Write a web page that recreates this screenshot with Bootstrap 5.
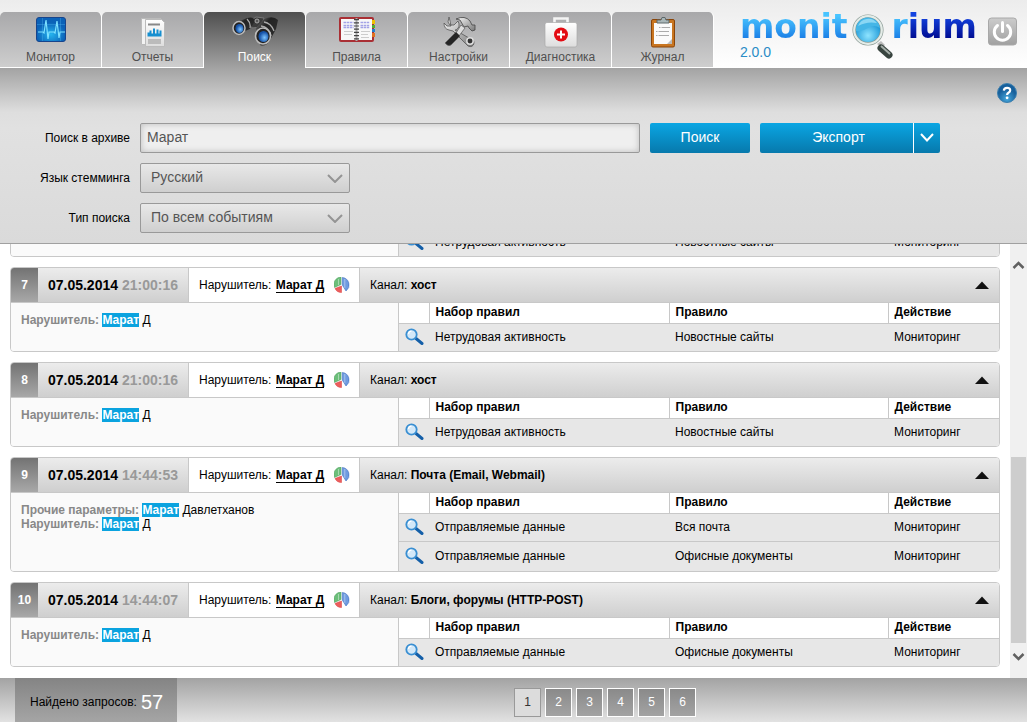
<!DOCTYPE html>
<html lang="ru">
<head>
<meta charset="utf-8">
<meta name="viewport" content="width=device-width, initial-scale=1">
<title>Monitorium – Поиск</title>
<link href="https://cdn.jsdelivr.net/npm/bootstrap@5.3.0/dist/css/bootstrap.min.css" rel="stylesheet">
<style>
  body { font-family: "Liberation Sans", Arial, sans-serif; font-size: 12px; line-height: 14px; color: #000; background: #fff; }
  /* header */
  .topbar { height: 68px; background: linear-gradient(#ececec, #fff); }
  .tab-link { width: 102px; height: 56px; padding-top: 2px; border-right: 1px solid #fff; border-bottom: 1px solid #fff; border-radius: 5px 5px 0 0; background: linear-gradient(#a8a8aa, #cecece) padding-box; color: #505050; text-decoration: none; }
  .tab-link svg { width: 36px; height: 36px; }
  .tab-link .wide-icon { width: 46px; }
  .tab-link.active { background: linear-gradient(#4f4f4f, #a3a3a3); color: #fff; border-bottom: 0; }
  .tools { padding-right: 10px; gap: 11px; }
  .brand-row { height: 44px; padding-top: 9px; }
  .brand-word { font: bold 33px/36px "DejaVu Sans", sans-serif; color: transparent; background: linear-gradient(#48c4ff 20%, #1a7ee6 85%); -webkit-background-clip: text; background-clip: text; }
  .brand-dark { background-image: linear-gradient(#1444e0 20%, #000c90 85%); }
  .brand-mark { width: 46px; height: 48px; margin: 4px -2px 0 0; }
  .version { font-size: 14px; line-height: 14px; color: #2a8cc6; padding-top: 1px; }
  .plain-btn { border: 0; background: none; padding: 0; line-height: 0; }
  .power { margin-top: 17px; }
  /* search panel */
  .search-panel { height: 176px; background: linear-gradient(#a3a3a3, #dedede 44px, #e1e1e1 60px, #dadada); border-bottom: 1px solid #a0a0a0; }
  .help-row { padding: 15px 10px 20px; }
  .form-rows { gap: 10px; padding-left: 10px; }
  .form-line { gap: 10px; }
  .field-label { width: 120px; text-align: right; }
  .query, .choice { height: 30px; border: 1px solid #999; border-radius: 2px; font-size: 14px; line-height: 20px; color: #555; }
  .query { flex: 0 1 500px; min-width: 0; padding: 0 6px 2px; background: #efefef; box-shadow: inset 0 0 6px #bbb; }
  .choice { width: 210px; padding: 0 30px 2px 10px; appearance: none; background: url("data:image/svg+xml,%3Csvg xmlns='http://www.w3.org/2000/svg' width='16' height='9'%3E%3Cpath d='M1 1l7 7 7-7' fill='none' stroke='%23949494' stroke-width='2'/%3E%3C/svg%3E") no-repeat right 6px center, linear-gradient(#e8e8e8, #cfcfcf); }
  .act { height: 30px; border: 0; border-radius: 2px; padding: 0 0 2px; font-size: 14px; line-height: 14px; color: #fff; background: linear-gradient(#0aa6e3, #0779ac); }
  .act-find { width: 100px; }
  .act-export { width: 153px; border-radius: 2px 0 0 2px; padding-left: 4px; }
  .act-more { width: 27px; border-left: 1px solid #fff; border-radius: 0 2px 2px 0; }
  /* results */
  .results { min-height: 0; padding: 0 10px 11px; gap: 10px; }
  .event { flex: none; border: 1px solid #c8c8c8; border-radius: 4px; overflow: hidden; }
  .event-head { height: 35px; border-bottom: 1px solid #c8c8c8; background: linear-gradient(#ececec, #cfcfcf); }
  .event-head > * { padding-bottom: 1px; }
  .event-no { width: 27px; color: #fff; background: linear-gradient(#737373, #a8a8a8); }
  .event-when { width: 151px; font-size: 14px; border-right: 1px solid #c8c8c8; }
  .event-when time + time { color: #999; }
  .event-who { width: 171px; padding-left: 10px; gap: 10px; background: #fff; border-right: 1px solid #c8c8c8; }
  .event-who a { margin-left: 1px; color: #000; text-decoration: none; border-bottom: 1px solid #000; }
  .event-channel { padding: 0 10px; }
  .event-body { display: grid; grid-template-columns: 388fr 600fr; }
  .params { padding: 10px; background: #fafafa; border-right: 1px solid #c8c8c8; }
  .params b { color: #888; }
  .params mark { padding: 0; color: #fff; background: #0ba3df; font-weight: bold; }
  .rules { width: 100%; table-layout: fixed; border-collapse: collapse; }
  .rules th, .rules td { padding: 0 0 0 6px; }
  .rules th { height: 20px; padding-bottom: 2px; border-bottom: 1px solid #c8c8c8; border-right: 1px solid #c8c8c8; }
  .rules th:last-child { border-right: 0; }
  .rules td { height: 28px; background: #e7e7e7; }
  .rules tr + tr td { height: 30px; border-top: 1px solid #c8c8c8; }
  .c-icon { width: 30px; } .c-set { width: 240px; } .c-rule { width: 219px; }
  /* scroll rail */
  .rail { width: 17px; padding: 13px 0 14px; background: #f0f0f0; }
  .rail-thumb { flex: 186 1 0; background: #cdcdcd; width: 15px; }
  .rail-gap { flex: 183 1 0; }
  /* footer */
  .bottombar { height: 44px; background: linear-gradient(#a3a3a3, #e2e2e2); }
  .found { width: 162px; margin-left: 15px; padding: 4px 0 0 15px; background: linear-gradient(#848484, #a5a5a5); }
  .found strong { font-size: 20px; font-weight: normal; color: #fff; }
  .pages { margin: 0 auto; padding: 4px 0 0 6px; }
  .page-btn { width: 27px; height: 29px; border: 1px solid #fff; color: #fff; background: linear-gradient(#8a8a8a, #a3a3a3); text-decoration: none; }
  .page-btn.current { border-color: #999; color: #333; background: #dcdcdc; }
</style>
</head>
<body>
<svg width="0" height="0" class="position-absolute" aria-hidden="true">
  <defs>
    <linearGradient id="steel" x1="0" y1="0" x2="1" y2="1"><stop offset="0" stop-color="#fafafa"/><stop offset="1" stop-color="#777"/></linearGradient>
    <linearGradient id="paper" x1="0" y1="0" x2="0" y2="1"><stop offset="0" stop-color="#fff"/><stop offset="1" stop-color="#ddd"/></linearGradient>
    <linearGradient id="dark" x1="0" y1="0" x2="1" y2="1"><stop offset="0" stop-color="#888"/><stop offset=".35" stop-color="#222"/><stop offset="1" stop-color="#333"/></linearGradient>
    <radialGradient id="screen" cy=".7"><stop offset="0" stop-color="#25b4ee"/><stop offset="1" stop-color="#0b62b8"/></radialGradient>
    <radialGradient id="lens" cx=".5" cy=".7"><stop offset="0" stop-color="#8fe4ff"/><stop offset="1" stop-color="#1f9ad8"/></radialGradient>
    <radialGradient id="eye" cx=".6" cy=".6"><stop offset="0" stop-color="#7cc4ff"/><stop offset="1" stop-color="#1552a8"/></radialGradient>
    <radialGradient id="helpfill" cx=".5" cy=".8"><stop offset="0" stop-color="#46a8dc"/><stop offset="1" stop-color="#17609c"/></radialGradient>
    <linearGradient id="pow" x1="0" y1="0" x2="0" y2="1"><stop offset="0" stop-color="#ccc"/><stop offset="1" stop-color="#a0a0a0"/></linearGradient>
    <symbol id="glass" viewBox="0 0 19 18">
      <path d="M11 10.500l6 5" stroke="#145fa8" stroke-width="3" stroke-linecap="round"/>
      <circle cx="6.500" cy="6.500" r="5.200" fill="#d3e8f8" stroke="#3a8fd2" stroke-width="1.800"/>
      <path d="M3.500 6a3 3 0 0 1 3-2.800" fill="none" stroke="#fff" stroke-width="1.300"/>
    </symbol>
    <symbol id="pie" viewBox="0 0 16 16">
      <path d="M7 7.500V0A7.500 7.500 0 0 0 .5 10.500z" fill="#6cbf7a" stroke="#4a9c5a" stroke-width=".5"/>
      <path d="M8.300 8V.5a7.500 7.500 0 0 1 3.700 13.500z" fill="#6f9be0" stroke="#3f6fc0" stroke-width=".6"/>
      <path d="M7.500 9v6.500a7 7 0 0 1-6.500-4z" fill="#ec5e5e" stroke="#d63b3b" stroke-width=".5"/>
      <path d="M4.500 2v6M10.800 2v9" stroke="#fff" stroke-opacity=".4"/>
    </symbol>
    <symbol id="tri" viewBox="0 0 14 8"><path d="M0 8l7-7.500 7 7.500z" fill="#111"/></symbol>
  </defs>
</svg>

<div class="d-flex flex-column vh-100 overflow-hidden">
  <header class="topbar d-flex flex-shrink-0">
    <nav class="d-flex align-items-end" aria-label="Разделы">
      <a href="#" class="tab-link d-flex flex-column align-items-center">
        <svg viewBox="0 0 36 36"><rect x="3.500" y="3.500" width="29" height="24" rx="2.500" fill="url(#screen)" stroke="#17448c"/><path d="M5 18h5l1 1 2-13 2 19 1-7h5l1 1 2-12 2 17 1-6h5" fill="none" stroke="#7fe2ff" stroke-width="1.200"/><path d="M4 10.500h28M9.500 4v23M27.500 4v23" stroke="#5bc0f5" stroke-opacity=".3"/></svg>
        <span>Монитор</span></a>
      <a href="#" class="tab-link d-flex flex-column align-items-center">
        <svg viewBox="0 0 36 36"><path d="M6.500 4.500h19v26h-19z" fill="#f2f2f2" stroke="#bbb"/><path d="M10.500 5.500h16l3 3v24h-19z" fill="url(#paper)" stroke="#bbb"/><path d="M13 10.500h12" stroke="#888" stroke-width="2"/><path d="M12.500 22.500v-4h2v-2h2v3h1.500v-5h2v5h1.500v-4h2v4h1v-3h2v6z" fill="#168fd0"/><path d="M13 25h13v5H13z" fill="#bbb"/></svg>
        <span>Отчеты</span></a>
      <a href="#" class="tab-link active d-flex flex-column align-items-center" aria-current="page">
        <svg class="wide-icon" viewBox="0 0 46 36"><path d="M18 7l6-4 8 1-3 9-9 1z" fill="#3b3b3b" stroke="#777"/><path d="M3 9l12-5q7-2 8 3l-5 8-10 4z" fill="url(#dark)"/><path d="M24 14l8-9q9-4 14 1l-2 9-7 13q-4 5-9 3z" fill="url(#dark)"/><path d="M32 8q7 1 10 9M29 12q8 1 10 10M15 5q4 4 3 9" stroke="#aaa" fill="none" stroke-width="1.300"/><ellipse cx="7" cy="14" rx="6" ry="6.500" fill="#222" stroke="#bbb" stroke-width="1.500"/><ellipse cx="7.500" cy="14.500" rx="4" ry="4.500" fill="url(#eye)"/><ellipse cx="31" cy="22" rx="7.500" ry="8" fill="#222" stroke="#bbb" stroke-width="1.600"/><ellipse cx="31.500" cy="22.500" rx="5" ry="5.500" fill="url(#eye)"/><circle cx="25" cy="7" r="2" fill="#555" stroke="#aaa"/></svg>
        <span>Поиск</span></a>
      <a href="#" class="tab-link d-flex flex-column align-items-center">
        <svg viewBox="0 0 36 36"><rect x="0" y="3" width="35" height="25" rx="2" fill="#a92f34"/><path d="M33 6h3v4h-3z" fill="#efc100"/><path d="M33 11h3v3h-3z" fill="#50b030"/><path d="M33 15h3v3h-3z" fill="#2080d0"/><path d="M33 19h3v4h-3z" fill="#e07020"/><path d="M2 5h31v21H2z" fill="#f8f8f8"/><path d="M4.500 8.500h10M4.500 11.500h10M4.500 13.500h10M21.500 8.500h9M21.500 11.500h9M21.500 13.500h9" stroke="#a3a3e6" stroke-width="1.600" stroke-dasharray="2.500 .6"/><path d="M5 17.500h9M5 20.500h8M22 17.500h9M22 20.500h7M22 23.500h8" stroke="#ccc"/><path d="M17.500 4v23" stroke="#aaa" stroke-width="2"/><path d="M17.500 5v21" stroke="#444" stroke-width="5" stroke-dasharray="1.200 2"/></svg>
        <span>Правила</span></a>
      <a href="#" class="tab-link d-flex flex-column align-items-center">
        <svg viewBox="0 0 36 36"><path d="M9 3l-1 5 2 3 4 0 4-4q3 6-2 9l-1 0 14 8q5 1 5 5-1 5-6 3l-15-15-4-1q-5-1-5-7l3 3 4 0-1-5z" fill="url(#steel)" stroke="#555" stroke-width=".8" transform="translate(-1 0)"/><circle cx="29" cy="27" r="3.200" fill="#333" stroke="#ddd" stroke-width="1.500"/><path d="M19 6l-4-1q9-4 14 2l2 4 3 0 0 5-3 1-3-3-1-2-4 1z" fill="url(#steel)" stroke="#444" stroke-width=".8"/><path d="M20 11l4 3-6 8-3-3z" fill="#ddd" stroke="#555" stroke-width=".7"/><path d="M15 18l4 4-9 9q-3 2-6-2z" fill="#252525" stroke="#666" stroke-width=".6"/></svg>
        <span>Настройки</span></a>
      <a href="#" class="tab-link d-flex flex-column align-items-center">
        <svg viewBox="0 0 36 36"><path d="M11.500 10V4.500h13V10" fill="none" stroke="#f4f4f4" stroke-width="2.600"/><rect x="2" y="8.500" width="32" height="24.500" rx="2" fill="url(#paper)" stroke="#aaa" stroke-width=".7"/><circle cx="18" cy="20.500" r="7" fill="#e30b12"/><path d="M18 16.500v8M14 20.500h8" stroke="#fff" stroke-width="2"/></svg>
        <span>Диагностика</span></a>
      <a href="#" class="tab-link d-flex flex-column align-items-center">
        <svg viewBox="0 0 36 36"><rect x="6.500" y="5.500" width="23" height="27.500" rx="1.500" fill="#c87520" stroke="#8a4509"/><path d="M9 9h18v21H9z" fill="#fafafa"/><path d="M27 25v5h-5z" fill="#bbb"/><path d="M14 13.500h11M11 17.500h13M11 21.500h13" stroke="#aaa" stroke-dasharray="1.500 1 20"/><path d="M12 9V6h4l1-2.500h3L21 6h3v3z" fill="#a9b7b9" stroke="#5d686a"/></svg>
        <span>Журнал</span></a>
    </nav>
    <div class="tools ms-auto d-flex">
      <div>
        <div class="brand-row d-flex">
          <span class="brand-word">monit</span>
          <svg class="brand-mark position-relative z-1" viewBox="0 0 46 48" aria-hidden="true"><path d="M29 31l4-3 4 4-3 3z" fill="#bbb"/><path d="M33 35l8 7" stroke="#38443f" stroke-width="7" stroke-linecap="round"/><path d="M33 33l9 8" stroke="#a4ada8" stroke-width="2"/><circle cx="20" cy="17" r="13.800" fill="url(#lens)" stroke="#8a9a94" stroke-width="3.500"/><circle cx="20" cy="17" r="13.800" fill="none" stroke="#e4ece8" stroke-width="2.200"/><path d="M8 18a12 12 0 0 1 24-3q-6-4-12 0t-12 3z" fill="#45b6e6"/><path d="M10 13a11 11 0 0 1 19-3q-10-2-19 3z" fill="#a8e6fa" opacity=".7"/></svg>
          <span class="brand-word">r</span><span class="brand-word brand-dark">ium</span>
        </div>
        <div class="version">2.0.0</div>
      </div>
      <button class="plain-btn power align-self-start" type="button" aria-label="Выход"><svg width="29" height="30" viewBox="0 0 29 30"><rect x=".5" y="1" width="28" height="27" rx="3" fill="url(#pow)" stroke="#a8a8a8"/><path d="M9.500 8.500a8.200 8.200 0 1 0 10 0" fill="none" stroke="#fff" stroke-width="3" stroke-linecap="round"/><path d="M14.500 5.500v9" stroke="#fff" stroke-width="3" stroke-linecap="round"/></svg></button>
    </div>
  </header>

  <form class="search-panel flex-shrink-0 d-flex flex-column" onsubmit="return false">
    <div class="help-row d-flex justify-content-end">
      <button class="plain-btn" type="button" aria-label="Справка"><svg width="20" height="20" viewBox="0 0 20 20"><circle cx="10" cy="10" r="9.500" fill="url(#helpfill)" stroke="#3d7fae"/><path d="M6.800 7.600q.2-2.800 3.300-2.800 3.100 0 3.100 2.500 0 1.500-1.700 2.400-1.400.8-1.400 2.300" fill="none" stroke="#fff" stroke-width="2.200"/><circle cx="10.100" cy="14.800" r="1.400" fill="#fff"/></svg></button>
    </div>
    <div class="form-rows d-flex flex-column">
      <div class="form-line d-flex align-items-center">
        <label class="field-label" for="q">Поиск в архиве</label>
        <input class="query" id="q" type="text" value="Марат">
        <button class="act act-find" type="submit">Поиск</button>
        <div class="d-flex"><button class="act act-export" type="button">Экспорт</button><button class="act act-more" type="button" aria-label="Форматы экспорта"><svg width="16" height="10" viewBox="0 0 16 10"><path d="M2 1l6 6.500L14 1" fill="none" stroke="#fff" stroke-width="2"/></svg></button></div>
      </div>
      <div class="form-line d-flex align-items-center">
        <label class="field-label" for="lang">Язык стемминга</label>
        <select class="choice" id="lang"><option>Русский</option></select>
      </div>
      <div class="form-line d-flex align-items-center">
        <label class="field-label" for="kind">Тип поиска</label>
        <select class="choice" id="kind"><option>По всем событиям</option></select>
      </div>
    </div>
  </form>

  <main class="d-flex flex-grow-1 overflow-hidden">
    <div class="results d-flex flex-column justify-content-end flex-grow-1 overflow-hidden" id="list"></div>
    <div class="rail d-flex flex-column align-items-center flex-shrink-0" aria-hidden="true">
      <svg width="13" height="16" viewBox="0 0 13 16"><path d="M1.500 11l5-5 5 5" fill="none" stroke="#606060" stroke-width="2.500"/></svg>
      <div class="rail-gap"></div>
      <div class="rail-thumb"></div>
      <svg width="13" height="21" viewBox="0 0 13 21"><path d="M1.500 11l5 5 5-5" fill="none" stroke="#606060" stroke-width="2.500"/></svg>
    </div>
  </main>

  <footer class="bottombar d-flex flex-shrink-0">
    <div class="found d-flex align-items-center gap-1"><span>Найдено запросов:</span><strong>57</strong></div>
    <nav class="pages d-flex gap-1 align-items-center" aria-label="Страницы">
      <a href="#" class="page-btn current d-flex align-items-center justify-content-center" aria-current="page">1</a>
      <a href="#" class="page-btn d-flex align-items-center justify-content-center">2</a>
      <a href="#" class="page-btn d-flex align-items-center justify-content-center">3</a>
      <a href="#" class="page-btn d-flex align-items-center justify-content-center">4</a>
      <a href="#" class="page-btn d-flex align-items-center justify-content-center">5</a>
      <a href="#" class="page-btn d-flex align-items-center justify-content-center">6</a>
    </nav>
  </footer>
</div>

<script>
  const who = ['Нарушитель', 'Д'];
  const idle = [['Нетрудовая активность', 'Новостные сайты']];
  // The first entry is scrolled out of view except for its last row.
  const events = [
    { tail: true, p: [], r: idle },
    { n: 7, t: '21:00:16', ch: 'хост', p: [who], r: idle },
    { n: 8, t: '21:00:16', ch: 'хост', p: [who], r: idle },
    { n: 9, t: '14:44:53', ch: 'Почта (Email, Webmail)', p: [['Прочие параметры', 'Давлетханов'], who],
      r: [['Отправляемые данные', 'Вся почта'], ['Отправляемые данные', 'Офисные документы']] },
    { n: 10, t: '14:44:07', ch: 'Блоги, форумы (HTTP-POST)', p: [who], r: [['Отправляемые данные', 'Офисные документы']] }
  ];
  const head = e => `
      <div class="event-head d-flex align-items-stretch">
        <b class="event-no d-flex align-items-center justify-content-center">${e.n}</b>
        <div class="event-when d-flex align-items-center justify-content-center gap-1 fw-bold"><time>07.05.2014</time><time>${e.t}</time></div>
        <div class="event-who d-flex align-items-center"><span>Нарушитель: <a href="#" class="fw-bold">Марат Д</a></span>
          <svg width="16" height="16"><use href="#pie"/></svg></div>
        <div class="event-channel d-flex align-items-center flex-grow-1 justify-content-between">
          <span>Канал: <b>${e.ch}</b></span>
          <button class="plain-btn" type="button" aria-label="Свернуть"><svg width="14" height="8"><use href="#tri"/></svg></button></div>
      </div>`;
  const columns = '<colgroup><col class="c-icon"><col class="c-set"><col class="c-rule"><col></colgroup>';
  const titles = '<thead><tr><th></th><th>Набор правил</th><th>Правило</th><th>Действие</th></tr></thead>';
  document.getElementById('list').innerHTML = events.map(e => `
    <article class="event">${e.tail ? '' : head(e)}
      <div class="event-body">
        <div class="params">${e.p.map(p => `<div><b>${p[0]}:</b> <mark>Марат</mark> ${p[1]}</div>`).join('')}</div>
        <table class="rules">${columns}${e.tail ? '' : titles}
          <tbody>${e.r.map(r => `<tr><td><svg class="d-block" width="19" height="18"><use href="#glass"/></svg></td><td>${r[0]}</td><td>${r[1]}</td><td>Мониторинг</td></tr>`).join('')}</tbody>
        </table>
      </div>
    </article>`).join('');
</script>
<script src="https://cdn.jsdelivr.net/npm/bootstrap@5.3.0/dist/js/bootstrap.bundle.min.js"></script>
</body>
</html>
